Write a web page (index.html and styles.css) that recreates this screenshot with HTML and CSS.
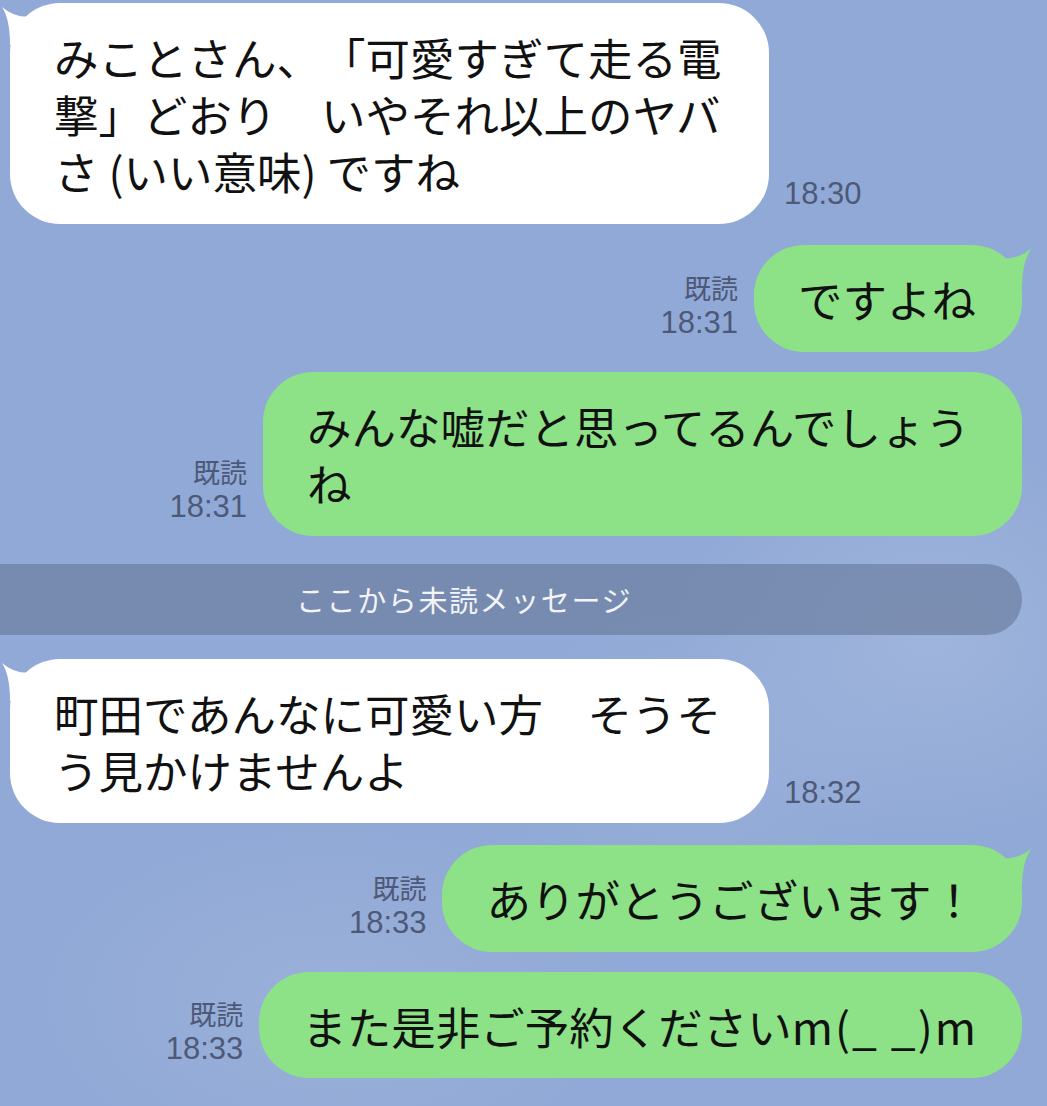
FILE: index.html
```html
<!DOCTYPE html>
<html lang="ja">
<head>
<meta charset="utf-8">
<title>LINE</title>
<link rel="stylesheet" href="styles.css">
</head>
<body>
<div class="chat">
  <div class="row left r1">
    <div class="bubble white">
      <svg class="tail tail-l" viewBox="0 0 50 50" width="50" height="50"><path d="M44 12 Q22 18 6 4 Q14 16 14 42 L44 42 Z" fill="#ffffff"/></svg>
      みことさん、「可愛すぎて走る電撃」どおり　いやそれ以上のヤバさ (いい意味) ですね
    </div>
    <div class="meta"><span class="time">18:30</span></div>
  </div>

  <div class="row right r2">
    <div class="meta"><span class="read">既読</span><span class="time">18:31</span></div>
    <div class="bubble green">
      <svg class="tail tail-r" viewBox="0 0 50 50" width="50" height="50"><path d="M6 12 Q28 18 46 3 Q36 16 36 42 L6 42 Z" fill="#8de287"/></svg>
      ですよね
    </div>
  </div>

  <div class="row right r3">
    <div class="meta"><span class="read">既読</span><span class="time">18:31</span></div>
    <div class="bubble green">みんな嘘だと思ってるんでしょうね</div>
  </div>

  <div class="unread">ここから未読メッセージ</div>

  <div class="row left r4">
    <div class="bubble white">
      <svg class="tail tail-l" viewBox="0 0 50 50" width="50" height="50"><path d="M44 12 Q22 18 6 4 Q14 16 14 42 L44 42 Z" fill="#ffffff"/></svg>
      町田であんなに可愛い方　そうそう見かけませんよ
    </div>
    <div class="meta"><span class="time">18:32</span></div>
  </div>

  <div class="row right r5">
    <div class="meta"><span class="read">既読</span><span class="time">18:33</span></div>
    <div class="bubble green">
      <svg class="tail tail-r" viewBox="0 0 50 50" width="50" height="50"><path d="M6 12 Q28 18 46 3 Q36 16 36 42 L6 42 Z" fill="#8de287"/></svg>
      ありがとうございます！
    </div>
  </div>

  <div class="row right r6">
    <div class="meta"><span class="read">既読</span><span class="time">18:33</span></div>
    <div class="bubble green nowrap">また是非ご予約ください<span class="emote">m(_ _)m</span></div>
  </div>
</div>
</body>
</html>
```

FILE: styles.css
```css
html, body {
  margin: 0;
  padding: 0;
}
body {
  width: 1047px;
  height: 1106px;
  overflow: hidden;
  background-color: #91a9d6;
  background-image:
    radial-gradient(ellipse 260px 200px at 930px 640px, rgba(170, 190, 225, 0.55), rgba(170, 190, 225, 0) 100%),
    radial-gradient(ellipse 300px 180px at 330px 1000px, rgba(165, 185, 222, 0.45), rgba(165, 185, 222, 0) 100%),
    radial-gradient(ellipse 220px 160px at 700px 760px, rgba(160, 182, 222, 0.4), rgba(160, 182, 222, 0) 100%);
  font-family: "Noto Sans CJK JP", "Noto Sans", sans-serif;
  color: #111;
}
.chat {
  display: flex;
  flex-direction: column;
  padding-top: 3px;
}
.row {
  display: flex;
  align-items: flex-end;
}
.row.left {
  padding-left: 10px;
  gap: 15px;
}
.row.right {
  justify-content: flex-end;
  padding-right: 25px;
  gap: 16px;
}
.r2 { margin-top: 21px; }
.r3 { margin-top: 20px; }
.r4 { margin-top: 24px; }
.r5 { margin-top: 22px; }
.r6 { margin-top: 20px; }

.bubble {
  position: relative;
  box-sizing: border-box;
  max-width: 759px;
  padding: 25px 46px 25px 44px;
  border-radius: 50px;
  font-size: 44.5px;
  line-height: 57px;
  letter-spacing: 0;
  text-spacing-trim: space-all;
}
.bubble.white { background: #ffffff; }
.bubble.green { background: #8de287; }
.bubble.nowrap {
  white-space: nowrap;
  max-width: none;
  padding: 25px 44px 24px 43px;
}
.emote {
  letter-spacing: 2px;
}
.tail {
  position: absolute;
  top: 0;
  display: block;
}
.tail-l { left: -14px; }
.tail-r { right: -14px; }

.meta {
  display: flex;
  flex-direction: column;
  align-items: flex-end;
  padding-bottom: 12px;
  font-family: "Liberation Sans", "Noto Sans CJK JP", sans-serif;
  color: #4d5977;
}
.read {
  font-family: "Noto Sans CJK JP", sans-serif;
  font-size: 27px;
  line-height: 34px;
}
.time {
  font-size: 31px;
  line-height: 35px;
}
.left .meta { padding-bottom: 13px; }

.unread {
  margin-top: 28px;
  margin-right: 25px;
  height: 71px;
  box-sizing: border-box;
  padding-right: 94px;
  border-radius: 0 36px 36px 0;
  background: rgba(110, 128, 162, 0.72);
  color: #f2f4f8;
  font-size: 29px;
  line-height: 71px;
  text-align: center;
  letter-spacing: 1.6px;
  text-spacing-trim: space-all;
}
```
